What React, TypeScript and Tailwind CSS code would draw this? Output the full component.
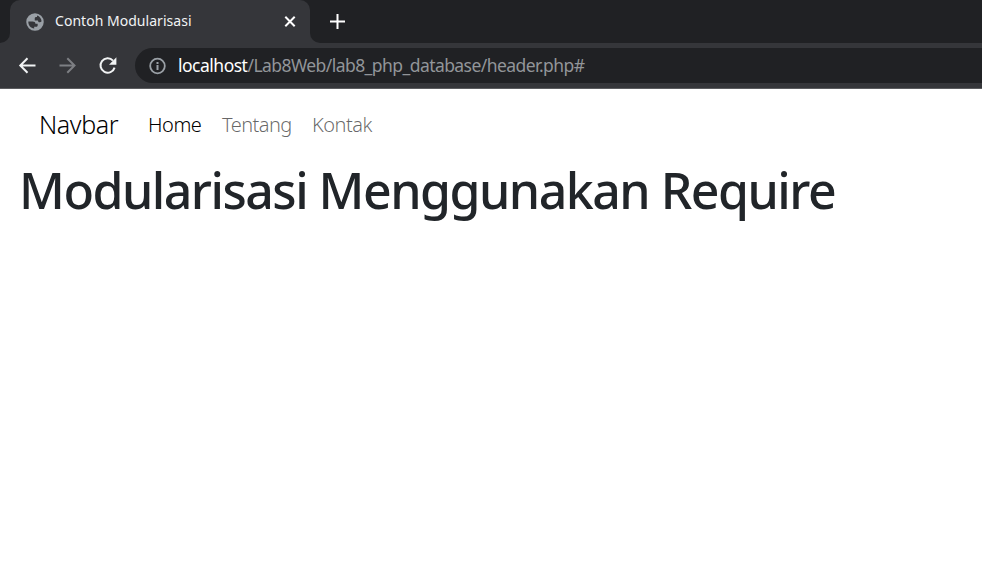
import type { ReactNode } from 'react';

function Globe() {
  return (
    <svg className="block size-5 shrink-0" viewBox="0 0 24 24" fill="#9aa0a6">
      <path
        fillRule="evenodd"
        d="M12 1.5a10.5 10.5 0 1 0 0 21 10.5 10.5 0 0 0 0-21zM11 19.9C7 19.4 4 16.1 4 12v-.6h5.2c2.2 0 3.3 1 3.3 2.8h2.7v1.6c0 1.3-.8 2-2 2H11v2.1zM19.9 11.1c-.6.9-1.3 1.3-2.3 1.3-1.4 0-2-.7-2-2.1h-3.9V7.7c0-1 .8-1.7 1.8-1.7h.9V4.3c3.3.9 5.1 3.7 5.5 6.8z"
      />
    </svg>
  );
}

function Icon({ children, color }: { children: ReactNode; color: string }) {
  return (
    <svg className="block size-5 shrink-0" viewBox="0 0 20 20" fill="none" stroke={color} strokeWidth="2">
      {children}
    </svg>
  );
}

function TabStrip() {
  return (
    <div className="flex h-[43px] bg-[#202124]">
      <div className="w-[10px] bg-[#35363a]">
        <div className="h-full rounded-br-[10px] bg-[#202124]" />
      </div>
      <div className="flex w-[300px] items-center rounded-t-[10px] bg-[#35363a] pl-[15px] pr-[11px]">
        <Globe />
        <span className="-mt-[2px] ml-[10px] flex-1 whitespace-nowrap text-[14px] leading-5 tracking-[0.03px] text-[#f1f3f4]">
          Contoh Modularisasi
        </span>
        <svg className="block size-[18px]" viewBox="0 0 18 18" stroke="#fff" strokeWidth="2">
          <path d="M4.3 3.8l9.4 9.4M13.7 3.8l-9.4 9.4" />
        </svg>
      </div>
      <div className="flex flex-1 bg-[#35363a]">
        <div className="flex h-full flex-1 items-center rounded-bl-[10px] bg-[#202124] pl-[17px]">
          <Icon color="#fff">
            <path d="M10.5 2v15M3 9.5h15" />
          </Icon>
        </div>
      </div>
    </div>
  );
}

function Toolbar() {
  return (
    <div className="flex h-[46px] items-center border-b border-[#5b5c5f] bg-[#35363a] pl-[17px]">
      <Icon color="#f1f3f4">
        <path d="M18.5 9.5H4M10.5 2.3L3.3 9.5l7.2 7.2" />
      </Icon>
      <span className="w-5" />
      <Icon color="#7d7f83">
        <path d="M2.5 9.5h14.5M10.3 2.3l7.2 7.2-7.2 7.2" />
      </Icon>
      <span className="w-5" />
      <Icon color="#f1f3f4">
        <path d="M17.6 11.6A7.2 7.2 0 1 1 16 4.6" />
        <path d="M19.4 1.3v7.4H12z" fill="#f1f3f4" stroke="none" />
      </Icon>
      <div className="ml-[18px] flex h-[35px] flex-1 items-center rounded-l-full bg-[#202124] pl-3">
        <Icon color="#9aa0a6">
          <circle cx="10.5" cy="10" r="7.3" strokeWidth="1.8" />
          <path d="M10.5 9v5M10.5 6v2" />
        </Icon>
        <span className="-mt-[2px] ml-[11px] flex whitespace-nowrap text-[17.5px] leading-6">
          <span className="tracking-[-0.5px] text-white">localhost</span>
          <span className="tracking-[-0.56px] text-[#929599]">/Lab8Web/lab8_php_database/header.php#</span>
        </span>
      </div>
    </div>
  );
}

export default function App() {
  return (
    <div className="flex h-[577px] w-[982px] flex-col overflow-hidden bg-white font-['Noto_Sans','Open_Sans',sans-serif]">
      <TabStrip />
      <Toolbar />
      <nav className="flex h-[71px] whitespace-nowrap pl-[39px] pt-4 font-light">
        <a className="w-[80px] text-[25px] leading-[38px] tracking-[-0.4px] text-black">Navbar</a>
        <a className="ml-[29px] w-[54px] pt-[5px] text-[20px] leading-[30px] tracking-[-0.45px] text-black">Home</a>
        <a className="ml-5 w-[70px] pt-[5px] text-[20px] leading-[30px] tracking-[-0.55px] text-black/60">Tentang</a>
        <a className="ml-5 pt-[5px] text-[20px] leading-[30px] tracking-[-0.5px] text-black/60">Kontak</a>
      </nav>
      <h1 className="whitespace-nowrap pl-[19px] text-[50px] font-medium leading-[60px] tracking-[-1.51px] text-[#212529]">
        Modularisasi Menggunakan Require
      </h1>
    </div>
  );
}
